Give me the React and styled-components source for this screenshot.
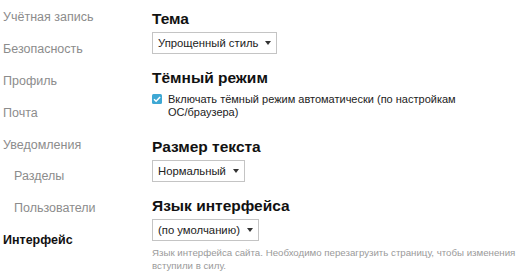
import styled, { createGlobalStyle } from 'styled-components';

const GlobalStyle = createGlobalStyle`
  body {
    margin: 0;
    background: #fff;
    font-family: "Liberation Sans", Arial, sans-serif;
  }
`;

const Layout = styled.div`
  display: flex;
  width: 517px;
  height: 274px;
  overflow: hidden;
`;

const Sidebar = styled.nav`
  width: 152px;
  flex-shrink: 0;
  display: flex;
  flex-direction: column;
  padding-top: 1px;
`;

const NavItem = styled.div`
  height: 31.9px;
  line-height: 32px;
  font-size: 12.5px;
  padding-left: ${props => props.sub ? '14px' : '3px'};
  color: ${props => props.active ? '#111' : '#8c8c8c'};
  font-weight: ${props => props.active ? 700 : 400};
  white-space: nowrap;
`;

const Main = styled.main`
  flex: 1;
  padding-top: 9.5px;
`;

const Section = styled.section`
  margin-bottom: 15px;
`;

const Heading = styled.h2`
  margin: 0 0 4px;
  font-size: 15.5px;
  line-height: 18px;
  font-weight: 700;
  color: #111;
`;

const Select = styled.div`
  display: inline-flex;
  align-items: center;
  gap: 7px;
  height: 22px;
  padding: 0 5px;
  border: 1px solid #c4c4c4;
  font-size: 11.3px;
  color: #222;
  box-sizing: border-box;
`;

const Caret = styled.span`
  width: 0;
  height: 0;
  border-left: 3.5px solid transparent;
  border-right: 3.5px solid transparent;
  border-top: 4px solid #333;
`;

const CheckRow = styled.label`
  display: flex;
  gap: 6px;
  margin-top: 6px;
  padding: 0 8px 4px 0;
  font-size: 11px;
  line-height: 13px;
  color: #222;
`;

const Box = styled.svg`
  flex-shrink: 0;
  margin-top: 1px;
`;

const NoWrap = styled.span`
  white-space: nowrap;
`;

const Help = styled.p`
  margin: 5px 0 0;
  font-size: 9.7px;
  line-height: 13px;
  color: #9a9a9a;
`;

const nav = [
  { label: 'Учётная запись' },
  { label: 'Безопасность' },
  { label: 'Профиль' },
  { label: 'Почта' },
  { label: 'Уведомления' },
  { label: 'Разделы', sub: true },
  { label: 'Пользователи', sub: true },
  { label: 'Интерфейс', active: true },
];

const Dropdown = ({ value }) => (
  <Select>
    {value}
    <Caret />
  </Select>
);

export default function App() {
  return (
    <>
      <GlobalStyle />
      <Layout>
        <Sidebar>
          {nav.map(item => (
            <NavItem key={item.label} sub={item.sub} active={item.active}>
              {item.label}
            </NavItem>
          ))}
        </Sidebar>
        <Main>
          <Section>
            <Heading>Тема</Heading>
            <Dropdown value="Упрощенный стиль" />
          </Section>
          <Section>
            <Heading>Тёмный режим</Heading>
            <CheckRow>
              <Box width="10" height="10" viewBox="0 0 10 10">
                <rect x="0" y="0" width="10" height="10" rx="1.5" fill="#3ea8d4" />
                <path d="M2 5.2 L4.1 7.2 L8.1 2.9" fill="none" stroke="#fff" strokeWidth="1.5" />
              </Box>
              <span>Включать тёмный режим автоматически (по настройкам <NoWrap>ОС/браузера)</NoWrap></span>
            </CheckRow>
          </Section>
          <Section>
            <Heading>Размер текста</Heading>
            <Dropdown value="Нормальный" />
          </Section>
          <Section>
            <Heading>Язык интерфейса</Heading>
            <Dropdown value="(по умолчанию)" />
            <Help>Язык интерфейса сайта. Необходимо перезагрузить страницу, чтобы изменения вступили в силу.</Help>
          </Section>
        </Main>
      </Layout>
    </>
  );
}
